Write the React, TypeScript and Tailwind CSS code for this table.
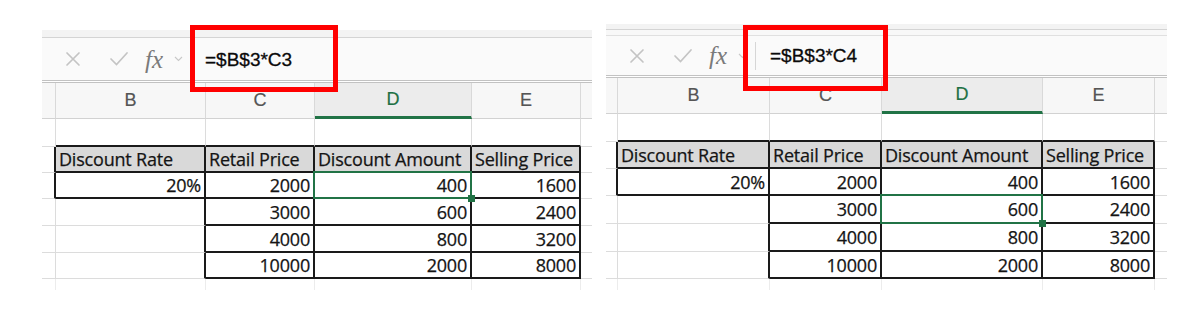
import React from 'react';

type Cell = { text: string; head?: boolean };

const letters = ['', 'B', 'C', 'D', 'E', ''];

// rows 0..6 below the column letters, cols 0..5 (A and F are cut off)
const cells: Cell[][] = [
  [{ text: '' }, { text: '' }, { text: '' }, { text: '' }, { text: '' }, { text: '' }],
  [
    { text: '' },
    { text: 'Discount Rate', head: true },
    { text: 'Retail Price', head: true },
    { text: 'Discount Amount', head: true },
    { text: 'Selling Price', head: true },
    { text: '' },
  ],
  [{ text: '' }, { text: '20%' }, { text: '2000' }, { text: '400' }, { text: '1600' }, { text: '' }],
  [{ text: '' }, { text: '' }, { text: '3000' }, { text: '600' }, { text: '2400' }, { text: '' }],
  [{ text: '' }, { text: '' }, { text: '4000' }, { text: '800' }, { text: '3200' }, { text: '' }],
  [{ text: '' }, { text: '' }, { text: '10000' }, { text: '2000' }, { text: '8000' }, { text: '' }],
  [{ text: '' }, { text: '' }, { text: '' }, { text: '' }, { text: '' }, { text: '' }],
];

const inTable = (r: number, c: number) =>
  (c === 1 && (r === 1 || r === 2)) || (c >= 2 && c <= 4 && r >= 1 && r <= 5);

function XIcon() {
  return (
    <svg width="16" height="16" viewBox="0 0 16 16" className="shrink-0">
      <path d="M2 2 L14 14 M14 2 L2 14" stroke="#c4c4c4" strokeWidth="1.7" strokeLinecap="round" />
    </svg>
  );
}

function CheckIcon() {
  return (
    <svg width="20" height="16" viewBox="0 0 20 16" className="shrink-0">
      <path d="M2 8 L7.5 13.5 L18 2" stroke="#c4c4c4" strokeWidth="1.7" fill="none" strokeLinecap="round" />
    </svg>
  );
}

function Chevron() {
  return (
    <svg width="9" height="6" viewBox="0 0 9 6" className="shrink-0">
      <path d="M1 1 L4.5 4.5 L8 1" stroke="#c8c8c8" strokeWidth="1.1" fill="none" />
    </svg>
  );
}

interface SheetProps {
  formula: string;
  selRow: number;
  colsClass: string;
  rowsClass: string;
  divider?: boolean;
  top: React.ReactNode;
  barClass: string;
}

function Sheet({ formula, selRow, colsClass, rowsClass, divider, top, barClass }: SheetProps) {
  return (
    <div className="flex flex-col">
      {top}
      {/* formula bar */}
      <div className={`flex items-center bg-[#fafafa] ${barClass}`}>
        <div className="w-[23px]" />
        <XIcon />
        <div className="w-[28px]" />
        <CheckIcon />
        <div className="w-[16px]" />
        <span className="font-['Liberation_Serif',serif] italic text-[25px] text-[#7a7a7a] leading-none w-[25px]">
          fx
        </span>
        <div className="w-[4px]" />
        <Chevron />
        {divider ? (
          <div className="ml-[8px] mr-[14px] w-px h-[28px] bg-[#d6d6d6]" />
        ) : (
          <div className="w-[22px]" />
        )}
        <span className="font-['Liberation_Sans',sans-serif] text-[19px] font-medium text-[#0a0a0a] leading-none [-webkit-text-stroke:0.3px_#0a0a0a]">
          {formula}
        </span>
      </div>
      <div className="h-[3px] border-y border-[#c2c2c2] bg-white" />
      {/* grid */}
      <div className={`grid ${colsClass} ${rowsClass}`}>
        {letters.map((l, c) => (
          <div
            key={`h${c}`}
            className={`flex items-center justify-center font-['Liberation_Sans',sans-serif] text-[18px] [-webkit-text-stroke:0.2px_currentColor] ${
              c === 3
                ? 'bg-[#ececec] text-[#1e7145] border-b-[3px] border-b-[#217346]'
                : 'bg-[#f7f7f7] text-[#555] border-b border-b-[#d2d2d2]'
            } ${c < 5 ? 'border-r border-r-[#d9d9d9]' : ''}`}
          >
            {l}
          </div>
        ))}
        {cells.map((row, r) =>
          row.map((cell, c) => {
            const blackR = c < 5 && (inTable(r, c) || inTable(r, c + 1));
            const blackB = r < 6 && (inTable(r, c) || inTable(r + 1, c));
            const last = r === 6;
            const sel = r === selRow && c === 3;
            return (
              <div
                key={`${r}-${c}`}
                className={`relative flex items-center overflow-visible whitespace-nowrap font-['Open_Sans',sans-serif] text-[18px] text-[#141414] leading-none tracking-[-0.2px] [-webkit-text-stroke:0.25px_#141414] ${
                  sel ? 'z-10' : ''
                } ${cell.head ? 'justify-start pl-[3px] bg-[#d9d9d9]' : 'justify-end pr-[3px]'} ${
                  c < 5
                    ? blackR
                      ? 'border-r-2 border-r-[#1a1a1a]'
                      : last
                        ? 'border-r border-r-[#ececec]'
                        : 'border-r border-r-[#dcdcdc]'
                    : ''
                } ${last ? '' : blackB ? 'border-b-2 border-b-[#1a1a1a]' : 'border-b border-b-[#dcdcdc]'}`}
              >
                {cell.text}
                {sel && (
                  <>
                    <div className="absolute left-[-2px] top-[-2px] right-[-2px] bottom-[-2px] border-[2.5px] border-[#217346]" />
                    <div className="absolute right-[-5px] bottom-[-5px] w-[7px] h-[7px] bg-[#217346]" />
                  </>
                )}
              </div>
            );
          })
        )}
      </div>
    </div>
  );
}

export default function App() {
  return (
    <div className="relative w-[1194px] h-[318px] bg-white overflow-hidden">
      <div className="flex items-start pl-[42px] gap-[14px]">
        <div className="w-[550px] mt-[30px]">
          <Sheet
            formula="=$B$3*C3"
            selRow={2}
            colsClass="grid-cols-[14px_150px_109px_157px_109px_11px]"
            rowsClass="grid-rows-[36px_28px_26px_26px_27px_27px_26px_11px]"
            barClass="h-[42px]"
            top={<div className="h-[8px] bg-[#f3f3f3] border-b border-[#d4d4d4]" />}
          />
        </div>
        <div className="w-[561px] mt-[24px]">
          <Sheet
            formula="=$B$3*C4"
            selRow={3}
            divider
            colsClass="grid-cols-[12px_152px_112px_161px_112px_12px]"
            rowsClass="grid-rows-[36px_28px_27px_27px_28px_28px_27px_11px]"
            barClass="h-[39px]"
            top={
              <>
                <div className="h-[6px] bg-[#f3f3f3] border-b border-[#d4d4d4]" />
                <div className="h-[6px] bg-[#f8f8f8] border-b border-[#e0e0e0]" />
              </>
            }
          />
        </div>
      </div>
      {/* annotation boxes */}
      <div className="absolute left-[190px] top-[25px] w-[148px] h-[67px] border-[5px] border-[#ff0000]" />
      <div className="absolute left-[743px] top-[25px] w-[145px] h-[66px] border-[5px] border-[#ff0000]" />
    </div>
  );
}
